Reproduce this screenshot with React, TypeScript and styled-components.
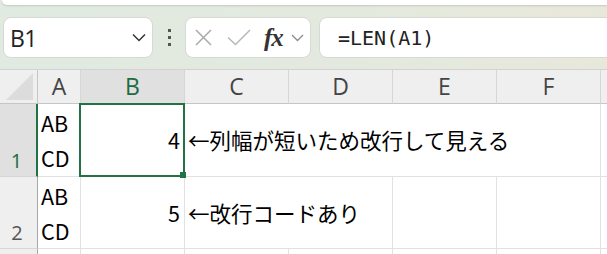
import React from "react";
import styled, { createGlobalStyle } from "styled-components";

const GREEN = "#217346";
const GRID = "#e1e1e1";

const GlobalStyle = createGlobalStyle`
  html, body {
    margin: 0;
    padding: 0;
    background: #ffffff;
    overflow: hidden;
  }
  body {
    width: 607px;
    height: 254px;
  }
`;

type Row = {
  num: string;
  height: number;
  selected?: boolean;
  cells: { text?: string; span?: number; align?: "left" | "right"; selected?: boolean; multi?: boolean }[];
};

const COLS = ["A", "B", "C", "D", "E", "F", ""];

const ROWS: Row[] = [
  {
    num: "1",
    height: 73,
    selected: true,
    cells: [
      { text: "AB\nCD", multi: true },
      { text: "4", align: "right", selected: true },
      { text: "←列幅が短いため改行して見える", span: 4 },
      {},
    ],
  },
  {
    num: "2",
    height: 72,
    cells: [
      { text: "AB\nCD", multi: true },
      { text: "5", align: "right" },
      { text: "←改行コードあり", span: 2 },
      {},
      {},
      {},
    ],
  },
  {
    // only a sliver of row 3 is in view, its number falls below the window
    num: "",
    height: 40,
    cells: [{}, {}, {}, {}, {}, {}, {}],
  },
];

const App: React.FC = () => {
  return (
    <>
      <GlobalStyle />
      <Window>
        <Toolbar>
          <TopPanel />
          <FormulaRow>
            <NameBox>
              <NameText>B1</NameText>
              <svg width="14" height="9" viewBox="0 0 14 9">
                <path d="M1 1.5 L7 7.5 L13 1.5" fill="none" stroke="#333" strokeWidth="1.5" />
              </svg>
            </NameBox>
            <Grip>
              <Dot />
              <Dot />
              <Dot />
            </Grip>
            <FuncBox>
              <svg width="17" height="17" viewBox="0 0 17 17">
                <path d="M1 1 L16 16 M16 1 L1 16" stroke="#aaaaaa" strokeWidth="1.5" />
              </svg>
              <svg width="24" height="17" viewBox="0 0 24 17">
                <path d="M1 8.5 L8.5 15.5 L23 1" fill="none" stroke="#b8b8b8" strokeWidth="1.5" />
              </svg>
              <FxLabel>fx</FxLabel>
              <svg width="13" height="8" viewBox="0 0 13 8">
                <path d="M1 1 L6.5 6.5 L12 1" fill="none" stroke="#8a8a8a" strokeWidth="1.3" />
              </svg>
            </FuncBox>
            <FormulaBox>=LEN(A1)</FormulaBox>
          </FormulaRow>
        </Toolbar>

        <Sheet $rows={ROWS.map((r) => r.height)}>
          <Corner>
            <svg width="27" height="27" viewBox="0 0 27 27">
              <path d="M27 0 L27 27 L0 27 Z" fill="#dcdcdc" />
            </svg>
          </Corner>
          {COLS.map((c, i) => (
            <ColHeader key={i} $selected={c === "B"}>
              {c}
            </ColHeader>
          ))}
          {ROWS.map((row, i) => (
            <React.Fragment key={i}>
              <RowHeader $selected={row.selected}>{row.num}</RowHeader>
              {row.cells.map((cell, j) => (
                <Cell
                  key={j}
                  $span={cell.span ?? 1}
                  $align={cell.align ?? "left"}
                  $multi={cell.multi}
                >
                  {cell.text}
                  {cell.selected && (
                    <Selection>
                      <FillHandle />
                    </Selection>
                  )}
                </Cell>
              ))}
            </React.Fragment>
          ))}
        </Sheet>
      </Window>
    </>
  );
};

export default App;

const Window = styled.div`
  width: 607px;
  height: 254px;
  overflow: hidden;
  display: flex;
  flex-direction: column;
  font-family: "Open Sans", "Noto Sans", sans-serif;
`;

const Toolbar = styled.div`
  height: 70px;
  box-sizing: border-box;
  border-bottom: 1px solid #d2d2d2;
  background: linear-gradient(90deg, #e0eae1 0%, #e3e9df 50%, #e8e8da 100%);
  display: flex;
  flex-direction: column;
`;

const TopPanel = styled.div`
  height: 5px;
  margin-left: 2px;
  background: #ffffff;
  border-bottom-left-radius: 8px;
  box-shadow: 0 1px 2px rgba(0, 0, 0, 0.14);
`;

const FormulaRow = styled.div`
  display: flex;
  align-items: center;
  margin-top: 12px;
  padding-left: 3px;
  height: 41px;
`;

const BoxBase = styled.div`
  height: 41px;
  box-sizing: border-box;
  background: #ffffff;
  border: 1px solid #d6dad4;
  border-radius: 8px;
  display: flex;
  align-items: center;
`;

const NameBox = styled(BoxBase)`
  width: 150px;
  padding: 0 6px 0 6px;
  justify-content: space-between;
`;

const NameText = styled.span`
  font-family: "Open Sans", sans-serif;
  font-size: 23px;
  color: #222;
  letter-spacing: -0.5px;
`;

const Grip = styled.div`
  width: 32px;
  display: flex;
  flex-direction: column;
  align-items: center;
  gap: 4px;
`;

const Dot = styled.span`
  width: 3px;
  height: 3px;
  background: #555;
`;

const FuncBox = styled(BoxBase)`
  width: 126px;
  padding-left: 9px;
  & > svg:nth-child(2) {
    margin-left: 15px;
  }
  & > svg:last-child {
    margin-left: 8px;
  }
`;

const FxLabel = styled.span`
  margin-left: 13px;
  font-family: "Liberation Serif", "DejaVu Serif", serif;
  font-style: italic;
  font-weight: 700;
  font-size: 25px;
  color: #333;
  line-height: 1;
  letter-spacing: -1px;
`;

const FormulaBox = styled(BoxBase)`
  flex: 1;
  margin-left: 8px;
  margin-right: -20px;
  padding-left: 18px;
  font-family: "DejaVu Sans Mono", "Liberation Mono", monospace;
  font-size: 20px;
  color: #222;
`;

const Sheet = styled.div<{ $rows: number[] }>`
  flex: 1;
  display: grid;
  grid-template-columns: 38px 43px 104px 104px 104px 104px 104px 1fr;
  grid-template-rows: 34px ${(p) => p.$rows.map((h) => `${h}px`).join(" ")};
  overflow: hidden;
`;

const HeaderBase = styled.div`
  box-sizing: border-box;
  background: #efefef;
  color: #444;
  display: flex;
  justify-content: center;
  font-family: "Open Sans", sans-serif;
`;

const Corner = styled(HeaderBase)`
  border-right: 1px solid #c6c6c6;
  border-bottom: 1px solid #c6c6c6;
  align-items: flex-end;
  justify-content: flex-end;
  padding: 0 4px 3px 0;
`;

const ColHeader = styled(HeaderBase)<{ $selected?: boolean }>`
  align-items: center;
  font-size: 23px;
  border-right: 1px solid #d6d6d6;
  border-bottom: 1px solid ${(p) => (p.$selected ? GREEN : "#c6c6c6")};
  background: ${(p) => (p.$selected ? "#e0e0e0" : "#efefef")};
  color: ${(p) => (p.$selected ? "#1d6b40" : "#444")};
  padding-bottom: 1px;
`;

const RowHeader = styled(HeaderBase)<{ $selected?: boolean }>`
  align-items: flex-end;
  font-size: 20px;
  padding: 0 3px 2px 0;
  border-bottom: 1px solid #d6d6d6;
  border-right: ${(p) => (p.$selected ? `2px solid ${GREEN}` : "1px solid #a8a8a8")};
  background: ${(p) => (p.$selected ? "#e0e0e0" : "#efefef")};
  color: ${(p) => (p.$selected ? "#1d6b40" : "#555")};
`;

const Cell = styled.div<{ $span: number; $align: "left" | "right"; $multi?: boolean }>`
  position: relative;
  box-sizing: border-box;
  grid-column: span ${(p) => p.$span};
  border-right: 1px solid ${GRID};
  border-bottom: 1px solid ${GRID};
  background: #ffffff;
  display: flex;
  align-items: center;
  justify-content: ${(p) => (p.$align === "right" ? "flex-end" : "flex-start")};
  padding: 0 4px 0 3px;
  font-family: "Noto Sans CJK JP", "Noto Sans", sans-serif;
  font-size: 21.5px;
  color: #000;
  white-space: ${(p) => (p.$multi ? "pre-line" : "nowrap")};
  line-height: ${(p) => (p.$multi ? "35px" : "1.2")};
`;

const Selection = styled.div`
  position: absolute;
  top: -1px;
  left: -2px;
  right: -1px;
  bottom: -1px;
  border: 2px solid ${GREEN};
  z-index: 2;
`;

const FillHandle = styled.div`
  position: absolute;
  right: -3px;
  bottom: -3px;
  width: 6px;
  height: 6px;
  background: ${GREEN};
`;
